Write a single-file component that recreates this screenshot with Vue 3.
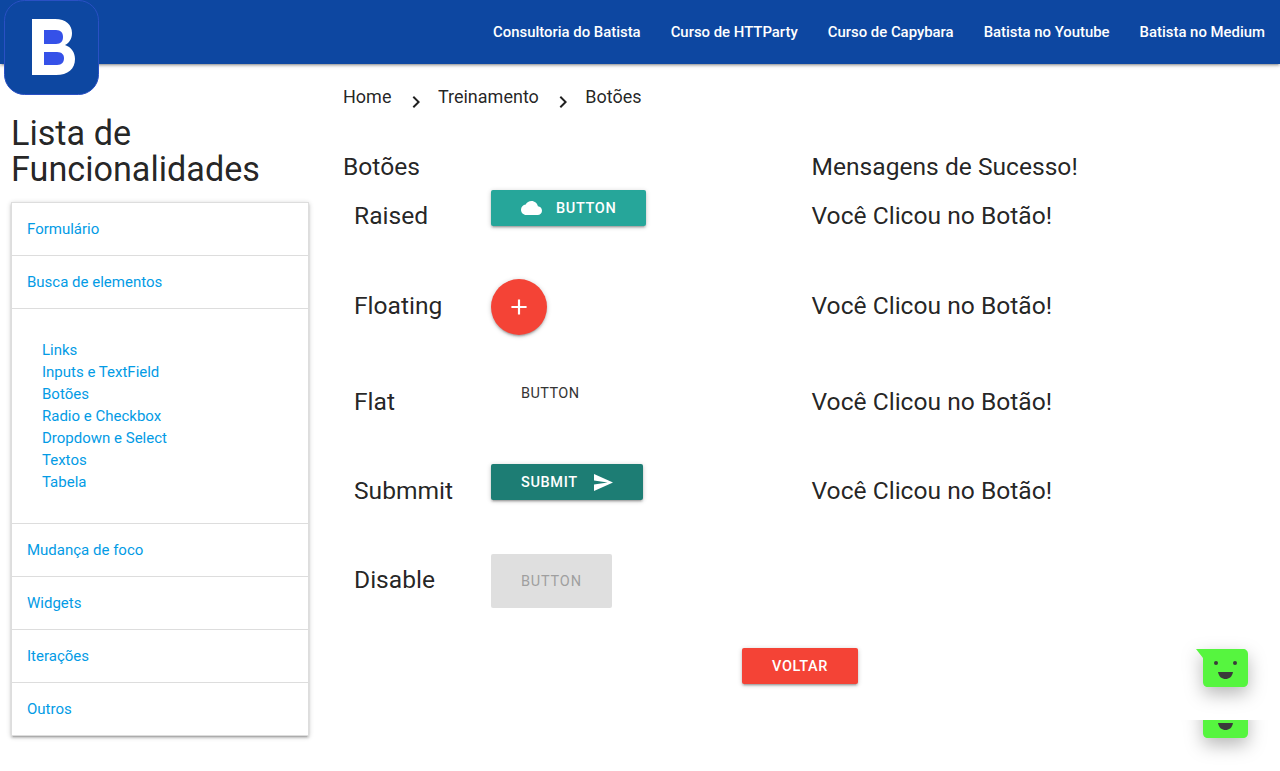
<template>
  <div class="page">
    <nav class="topbar">
      <a v-for="link in navLinks" :key="link" class="topbar-link">{{ link }}</a>
    </nav>

    <svg class="logo" width="95" height="95" viewBox="0 0 95 95">
      <rect x="0.5" y="0.5" width="94" height="94" rx="20" fill="#0d47a1" stroke="#2a50c4" stroke-width="1" />
      <path d="M28 19H51C62 19 68 25 68 33C68 39 65 43 61 45C67 47 71 52 71 59C71 69 64 75 52 75H28Z" fill="#fff" />
      <path d="M40 30H52C57 30 59 33 59 37C59 41 57 44 52 44H40Z" fill="#3551e8" />
      <path d="M40 52H53C58 52 60 55 60 58C60 62 58 65 53 65H40Z" fill="#3551e8" />
    </svg>

    <div class="layout">
      <aside class="sidebar">
        <h4 class="sidebar-title">Lista de Funcionalidades</h4>
        <ul class="collapsible">
          <li v-for="group in menu" :key="group.title" class="group">
            <a class="group-header">{{ group.title }}</a>
            <ul v-if="group.items" class="group-body">
              <li v-for="item in group.items" :key="item"><a>{{ item }}</a></li>
            </ul>
          </li>
        </ul>
      </aside>

      <main class="content">
        <div class="breadcrumbs">
          <template v-for="(crumb, i) in crumbs" :key="crumb">
            <svg v-if="i" class="crumb-arrow" width="24" height="24" viewBox="0 0 24 24">
              <path d="M8.6 16.6 13.2 12 8.6 7.4 10 6l6 6-6 6z" fill="#212121" />
            </svg>
            <span>{{ crumb }}</span>
          </template>
        </div>

        <div class="titles">
          <h5>Botões</h5>
          <h5>Mensagens de Sucesso!</h5>
        </div>

        <div class="row row-raised">
          <span class="label label-high">Raised</span>
          <div>
            <button class="btn btn-raised">
              <svg class="icon-cloud" width="24" height="24" viewBox="0 0 24 24">
                <path d="M19.35 10.04C18.67 6.59 15.64 4 12 4 9.11 4 6.6 5.64 5.35 8.04 2.34 8.36 0 10.91 0 14c0 3.31 2.69 6 6 6h13c2.76 0 5-2.24 5-5 0-2.64-2.05-4.78-4.65-4.96z" fill="#fff" />
              </svg>
              Button
            </button>
          </div>
          <span class="label label-high">Você Clicou no Botão!</span>
        </div>

        <div class="row row-floating">
          <span class="label">Floating</span>
          <div>
            <button class="fab">
              <svg width="26" height="26" viewBox="0 0 24 24"><path d="M19 13h-6v6h-2v-6H5v-2h6V5h2v6h6z" fill="#fff" /></svg>
            </button>
          </div>
          <span class="label">Você Clicou no Botão!</span>
        </div>

        <div class="row row-flat">
          <span class="label">Flat</span>
          <div><button class="btn btn-flat">Button</button></div>
          <span class="label">Você Clicou no Botão!</span>
        </div>

        <div class="row row-submit">
          <span class="label">Submmit</span>
          <div>
            <button class="btn btn-submit">
              Submit
              <svg class="icon-send" width="19" height="17" viewBox="2 3 21 18" preserveAspectRatio="none"><path d="M2.01 21 23 12 2.01 3 2 10l15 2-15 2z" fill="#fff" /></svg>
            </button>
          </div>
          <span class="label">Você Clicou no Botão!</span>
        </div>

        <div class="row row-disable">
          <span class="label label-high">Disable</span>
          <div><button class="btn btn-disabled" disabled>Button</button></div>
        </div>

        <button class="btn btn-back">Voltar</button>
      </main>
    </div>

    <div class="chat-clip chat-clip-top">
      <svg class="bubble" width="53" height="39" viewBox="0 0 53 39">
        <path d="M0 0H47C50 0 52 2 52 5V33C52 36 50 38 47 38H12C9 38 7 36 7 33V9Z" fill="#56f53f" />
        <circle cx="20" cy="14" r="2" fill="#3a3a3a" />
        <circle cx="39" cy="14" r="2" fill="#3a3a3a" />
        <path d="M22 23H37C36 28 33 30 29.500 30C26 30 23 28 22 23Z" fill="#3a3a3a" />
      </svg>
    </div>
    <div class="chat-clip chat-clip-bottom">
      <svg class="bubble bubble-cut" width="53" height="39" viewBox="0 0 53 39">
        <path d="M0 0H47C50 0 52 2 52 5V33C52 36 50 38 47 38H12C9 38 7 36 7 33V9Z" fill="#56f53f" />
        <path d="M22 23H37C36 28 33 30 29.500 30C26 30 23 28 22 23Z" fill="#3a3a3a" />
      </svg>
    </div>
  </div>
</template>

<script setup>
const navLinks = [
  'Consultoria do Batista',
  'Curso de HTTParty',
  'Curso de Capybara',
  'Batista no Youtube',
  'Batista no Medium',
]

const menu = [
  { title: 'Formulário' },
  {
    title: 'Busca de elementos',
    items: ['Links', 'Inputs e TextField', 'Botões', 'Radio e Checkbox', 'Dropdown e Select', 'Textos', 'Tabela'],
  },
  { title: 'Mudança de foco' },
  { title: 'Widgets' },
  { title: 'Iterações' },
  { title: 'Outros' },
]

const crumbs = ['Home', 'Treinamento', 'Botões']
</script>

<style>
html,
body {
  margin: 0;
  background: #fff;
}
</style>

<style scoped>
.page {
  position: relative;
  height: 771px;
  overflow: hidden;
  font-family: Roboto, "Noto Sans", sans-serif;
  color: rgba(0, 0, 0, 0.87);
}

.topbar {
  display: flex;
  justify-content: flex-end;
  height: 64px;
  background: #0d47a1;
  box-shadow: 0 2px 2px 0 rgba(0, 0, 0, 0.14), 0 3px 1px -2px rgba(0, 0, 0, 0.12), 0 1px 5px 0 rgba(0, 0, 0, 0.2);
}
.topbar-link {
  padding: 0 15px;
  color: #fff;
  font-size: 14.9px;
  font-weight: 500;
  line-height: 64px;
}

.logo {
  position: absolute;
  top: 0;
  left: 4px;
}

.layout {
  display: flex;
}

.sidebar {
  flex: 0 0 320px;
  box-sizing: border-box;
  padding: 51px 11px 0;
}
.sidebar-title {
  margin: 0 0 15px;
  font-size: 34.2px;
  font-weight: 400;
  line-height: 36px;
}

.collapsible {
  margin: 0;
  padding: 0;
  list-style: none;
  border: 1px solid #ddd;
  border-bottom: 0;
  box-shadow: 0 2px 2px 0 rgba(0, 0, 0, 0.14), 0 3px 1px -2px rgba(0, 0, 0, 0.12), 0 1px 5px 0 rgba(0, 0, 0, 0.2);
}
.group {
  border-bottom: 1px solid #ddd;
}
.group-header {
  display: block;
  padding: 15px;
  color: #039be5;
  font-size: 15px;
  line-height: 22px;
}
.group-body {
  margin: 0;
  padding: 30px;
  list-style: none;
  border-top: 1px solid #ddd;
  color: #039be5;
  font-size: 15px;
  line-height: 22px;
}

.content {
  flex: 1;
  padding: 20px 0 0 23px;
}

.breadcrumbs {
  display: flex;
  align-items: flex-start;
  font-size: 18px;
  line-height: 26px;
}
.crumb-arrow {
  margin: 6px 10px 0 12.5px;
}

.titles {
  display: grid;
  grid-template-columns: 468.5px 1fr;
  margin-top: 38px;
}
.titles h5 {
  margin: 0;
  font-size: 24.6px;
  font-weight: 400;
  line-height: 30px;
}

.row {
  display: grid;
  grid-template-columns: 137px 320.5px 1fr;
  align-items: start;
  padding-left: 11px;
  box-sizing: border-box;
}
.row-raised {
  height: 89px;
  margin-top: 8px;
}
.row-floating {
  height: 96px;
}
.row-flat {
  height: 89px;
}
.row-submit {
  height: 90px;
}
.row-disable {
  height: 94px;
}
.label {
  margin-top: 11px;
  font-size: 24.6px;
  line-height: 31px;
}
.label-high {
  margin-top: 10px;
}

.btn {
  display: inline-flex;
  align-items: center;
  height: 36px;
  padding: 0 30px;
  border: 0;
  border-radius: 2px;
  color: #fff;
  font-family: inherit;
  font-size: 14.5px;
  font-weight: 500;
  letter-spacing: 0.65px;
  text-transform: uppercase;
  box-shadow: 0 2px 2px 0 rgba(0, 0, 0, 0.14), 0 3px 1px -2px rgba(0, 0, 0, 0.12), 0 1px 5px 0 rgba(0, 0, 0, 0.2);
}
.btn-raised {
  background: #26a69a;
}
.icon-cloud {
  width: 21px;
  margin-right: 14px;
}
.fab {
  display: flex;
  align-items: center;
  justify-content: center;
  width: 56px;
  height: 56px;
  padding: 0;
  border: 0;
  border-radius: 50%;
  background: #f44336;
  box-shadow: 0 2px 2px 0 rgba(0, 0, 0, 0.14), 0 3px 1px -2px rgba(0, 0, 0, 0.12), 0 1px 5px 0 rgba(0, 0, 0, 0.2);
}
.btn-flat {
  background: transparent;
  box-shadow: none;
  color: #343434;
  font-weight: 400;
  letter-spacing: 0.4px;
}
.btn-submit {
  background: #1d7d74;
}
.icon-send {
  margin-left: 16px;
}
.btn-disabled {
  height: 54px;
  background: #dfdfdf;
  box-shadow: none;
  color: #9f9f9f;
  font-weight: 400;
  letter-spacing: 0.8px;
}
.btn-back {
  margin-left: 399px;
  background: #f44336;
}

.chat-clip {
  position: absolute;
  left: 1160px;
  width: 120px;
  overflow: hidden;
}
.chat-clip-top {
  top: 620px;
  height: 100px;
}
.chat-clip-bottom {
  top: 720px;
  height: 51px;
}
.bubble {
  position: absolute;
  left: 36px;
  top: 29px;
  filter: drop-shadow(0 7px 9px rgba(0, 0, 0, 0.28));
}
.bubble-cut {
  top: -20px;
}
</style>
